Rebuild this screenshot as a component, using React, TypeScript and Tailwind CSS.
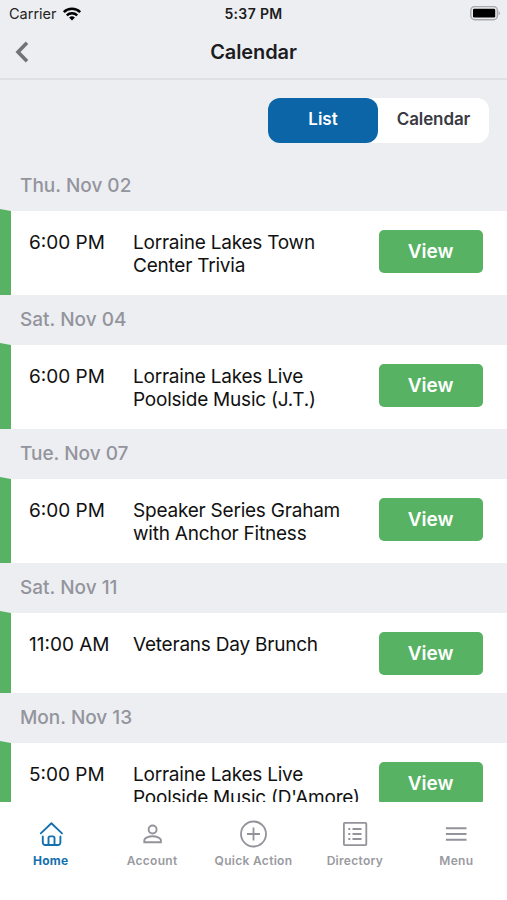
import clsx from "clsx";

interface CalendarEvent {
  day: string;
  time: string;
  title: string[];
  height?: string;
}

const events: CalendarEvent[] = [
  { day: "Thu. Nov 02", time: "6:00 PM", title: ["Lorraine Lakes Town", "Center Trivia"] },
  { day: "Sat. Nov 04", time: "6:00 PM", title: ["Lorraine Lakes Live", "Poolside Music (J.T.)"] },
  { day: "Tue. Nov 07", time: "6:00 PM", title: ["Speaker Series Graham", "with Anchor Fitness"] },
  { day: "Sat. Nov 11", time: "11:00 AM", title: ["Veterans Day Brunch"], height: "h-20" },
  { day: "Mon. Nov 13", time: "5:00 PM", title: ["Lorraine Lakes Live", "Poolside Music (D'Amore)"] },
];

const WifiIcon = () => (
  <svg width="20" height="14" viewBox="0 0 20 14" fill="none" stroke="#000" strokeWidth="2.5">
    <path d="M1.8 5.2a11.6 11.6 0 0 1 16.4 0" />
    <path d="M4.8 8.4a7.4 7.4 0 0 1 10.4 0" />
    <path d="M10 13.5 7.1 10.6a4.1 4.1 0 0 1 5.8 0Z" fill="#000" stroke="none" />
  </svg>
);

const BatteryIcon = () => (
  <svg width="31" height="15" viewBox="0 0 31 15">
    <rect x="0.8" y="0.5" width="26.6" height="13.2" rx="4" fill="#ececf0" stroke="#aaaaad" strokeWidth="1.5" />
    <rect x="3" y="2.7" width="22.2" height="8.8" rx="1.2" fill="#000" />
    <path d="M28.6 4.9c1.8.7 1.8 3.7 0 4.4Z" fill="#aaaaad" />
  </svg>
);

const StatusBar = () => (
  <div className="grid h-[27px] grid-cols-3 items-center px-[7px]">
    <div className="flex items-center gap-[5px] pl-0.5 text-[14.5px] text-[#222]">
      <span>Carrier</span>
      <WifiIcon />
    </div>
    <span className="text-center text-[14px] font-semibold tracking-[0.35px] text-[#1c1c1e]">5:37 PM</span>
    <div className="-mr-px flex justify-end">
      <BatteryIcon />
    </div>
  </div>
);

const Header = () => (
  <div className="grid h-[53px] grid-cols-3 items-center border-b-2 border-[#dfe0e4] px-[15px] pb-px">
    <svg width="14" height="22" viewBox="0 0 14 22" fill="none" stroke="#737376" strokeWidth="3.6">
      <path d="M12 1.8 3 11l9 9.2" />
    </svg>
    <h1 className="text-center text-[20px] font-semibold tracking-[-0.1px] text-[#1c1c1e]">Calendar</h1>
  </div>
);

const ViewToggle = () => (
  <div className="flex h-[81px] justify-end pr-[18px] pt-[17.5px]">
    <div className="flex h-[45px] w-[221px] rounded-xl bg-white text-[17px] font-semibold">
      <button className="w-[110px] rounded-xl bg-[#0b65a6] text-white">List</button>
      <button className="flex-1 tracking-[-0.1px] text-[#3a3a44]">Calendar</button>
    </div>
  </div>
);

const EventRow = ({ day, time, title, height = "h-[84px]" }: CalendarEvent) => (
  <section>
    <h2 className="flex h-[50px] items-center bg-[#edeef2] pl-5 text-[19px] font-medium text-[#93949c]">
      {day}
    </h2>
    <div className={clsx("flex bg-white text-[19px] leading-[23px] text-[#111]", height)}>
      <div className="-mt-0.5 w-[11px] shrink-0 bg-[#57b263] [clip-path:polygon(0_0,100%_2px,100%_100%,0_100%)]" />
      <p className="ml-[18px] mt-5 w-[104px] shrink-0">{time}</p>
      <div className="mt-5 w-[245.5px] shrink-0 whitespace-nowrap tracking-[-0.22px]">
        {title.map((line) => (
          <p key={line}>{line}</p>
        ))}
      </div>
      <button className="mt-[19px] h-[43px] w-[104px] shrink-0 rounded-[5px] bg-[#57b263] text-[19px] font-semibold text-white">
        View
      </button>
    </div>
  </section>
);

const HomeIcon = () => (
  <svg width="26" height="28" viewBox="0 0 26 28" fill="none" stroke="#1670ae" strokeWidth="1.9" strokeLinecap="round" strokeLinejoin="round">
    <path d="M2.8 13.4 13.4 3.2 24 13.4" />
    <path d="M4.8 16.4v6.2a2.4 2.4 0 0 0 2.4 2.4h12.8a2.4 2.4 0 0 0 2.4-2.4v-6.2" />
    <path d="M10.5 25v-7a1.6 1.6 0 0 1 1.6-1.6h2.8a1.6 1.6 0 0 1 1.6 1.6v7" />
  </svg>
);

const AccountIcon = () => (
  <svg width="26" height="28" viewBox="0 0 26 28" fill="none" stroke="#93939b" strokeWidth="1.9">
    <circle cx="13.6" cy="9.5" r="4" />
    <path d="M5.3 22.3v-1.9c0-2.8 4.8-4.1 8.3-4.1s8.3 1.3 8.3 4.1v1.9Z" />
  </svg>
);

const QuickActionIcon = () => (
  <svg width="28" height="28" viewBox="0 0 28 28" fill="none" stroke="#93939b" strokeWidth="1.8">
    <circle cx="14.5" cy="14" r="12.5" />
    <path d="M14.5 7.5v13M8 14h13" />
  </svg>
);

const DirectoryIcon = () => (
  <svg width="26" height="28" viewBox="0 0 26 28" fill="none" stroke="#93939b" strokeWidth="1.8">
    <rect x="1.9" y="2.9" width="22.4" height="22.2" rx="0.8" />
    <path d="M10.5 9h9M10.5 14h9M10.5 19h9M6.3 9h2M6.3 14h2M6.3 19h2" />
  </svg>
);

const MenuIcon = () => (
  <svg width="26" height="28" viewBox="0 0 26 28" fill="none" stroke="#93939b" strokeWidth="2">
    <path d="M2.9 8.3h20.6M2.9 14h20.6M2.9 19.7h20.6" />
  </svg>
);

const tabs = [
  { label: "Home", icon: HomeIcon, active: true },
  { label: "Account", icon: AccountIcon },
  { label: "Quick Action", icon: QuickActionIcon },
  { label: "Directory", icon: DirectoryIcon },
  { label: "Menu", icon: MenuIcon },
];

const TabBar = () => (
  <nav className="grid h-[98px] grid-cols-5 bg-white pt-[18px]">
    {tabs.map(({ label, icon: Icon, active }) => (
      <button key={label} className="flex flex-col items-center gap-[5px]">
        <Icon />
        <span
          className={clsx(
            "whitespace-nowrap text-[12px] leading-4",
            active ? "font-bold tracking-[0.25px] text-[#1670ae]" : "font-semibold tracking-[0.3px] text-[#9a9aa1]"
          )}
        >
          {label}
        </span>
      </button>
    ))}
  </nav>
);

const App = () => {
  return (
    <div className="flex h-[900px] w-[507px] flex-col overflow-hidden bg-[#edeef2] font-['Inter',sans-serif]">
      <StatusBar />
      <Header />
      <main className="min-h-0 flex-1 overflow-hidden">
        <ViewToggle />
        {events.map((event) => (
          <EventRow key={event.day} {...event} />
        ))}
      </main>
      <TabBar />
    </div>
  );
};

export default App;
